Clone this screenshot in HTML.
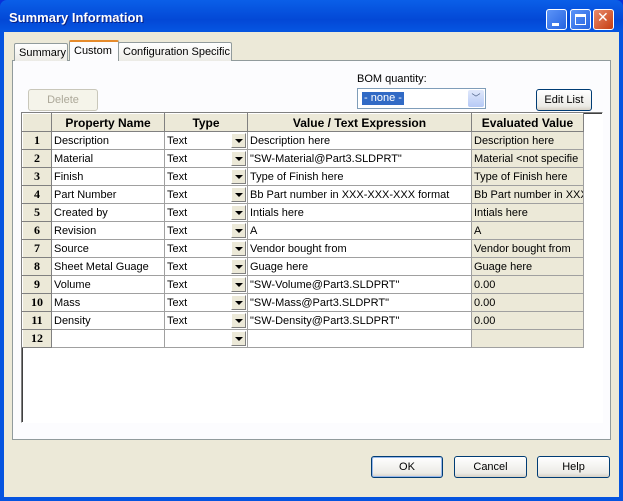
<!DOCTYPE html>
<html><head><style>
*{box-sizing:border-box;margin:0;padding:0}
body{width:623px;height:501px;overflow:hidden;font-family:"Liberation Sans",sans-serif;font-size:11px;background:#0831d9;position:relative}
.a{position:absolute;white-space:nowrap}
.win{left:0;top:0;width:623px;height:501px;background:linear-gradient(#0a5fe8,#0348d6 20px,#0554e0 30px);border-radius:7px 7px 0 0}
.body{left:4px;top:32px;width:615px;height:465px;background:#ECE9D8}
.title{left:9px;top:10px;color:#fff;font-weight:bold;font-size:13px;text-shadow:1px 1px #0a1f80}
.tb{top:9px;width:21px;height:21px;border:1px solid #fff;border-radius:3px;background:linear-gradient(135deg,#5c94f8,#2663e0)}
.panel{left:12px;top:60px;width:599px;height:380px;background:#FCFCFE;border:1px solid #919B9C}
.tab{top:42px;height:19px;border:1px solid #919B9C;border-bottom:none;background:linear-gradient(#fff,#ECEBE6);padding:3px 4px 0;border-radius:2px 2px 0 0;overflow:hidden}
.btn{height:22px;border:1px solid #003C74;border-radius:3px;background:linear-gradient(#fff,#ECEBE6 80%,#d6d0c5);text-align:center;line-height:20px}
.grid{left:21px;top:112px;width:582px;height:311px;background:#fff;border:1px solid;border-color:#808080 #fff #fff #808080;box-shadow:inset 1px 1px #404040}
table{position:absolute;left:22px;top:113px;width:561px;border-collapse:collapse;table-layout:fixed}
td{height:18px;border:1px solid #a0a0a0;padding:0 2px;white-space:nowrap;overflow:hidden;font-size:11px}
th{height:18px;background:#ECE9D8;border:1px solid #808080;border-top-color:#fff;border-left-color:#fff;font-weight:bold;font-size:12px;overflow:hidden;white-space:nowrap}
td.n{background:#ECE9D8;text-align:center;font-weight:bold;font-family:"Liberation Serif",serif;font-size:12px;border:1px solid #808080;border-top-color:#fff;border-left-color:#fff}
td.e{background:#ECE9D8}
td.t{position:relative}
td.t i{position:absolute;right:1px;top:1px;width:15px;height:15px;background:#ECE9D8;border:1px solid;border-color:#fff #808080 #808080 #fff}
td.t i:after{content:"";position:absolute;left:3px;top:5px;border:4px solid transparent;border-top:4px solid #000;border-bottom:0}
</style></head><body>
<div class="a win"></div>
<div class="a title">Summary Information</div>
<div class="a tb" style="left:546px"><div style="position:absolute;left:5px;top:13px;width:7px;height:3px;background:#fff"></div></div>
<div class="a tb" style="left:570px"><div style="position:absolute;left:4px;top:4px;width:11px;height:11px;border:1px solid #fff;border-top-width:3px"></div></div>
<div class="a tb" style="left:593px;background:linear-gradient(135deg,#e88a6c,#c63d10)"><div style="position:absolute;left:3px;top:0px;color:#fff;font-size:14px;font-weight:bold;font-family:'DejaVu Sans'">✕</div></div>
<div class="a body"></div>
<div class="a panel"></div>
<div class="a tab" style="left:14px;top:43px;height:18px;width:54px">Summary</div>
<div class="a tab" style="left:118px;width:114px">Configuration Specific</div>
<div class="a tab" style="left:69px;top:40px;height:21px;width:50px;background:#FCFCFE;border-top:2px solid #E68B2C">Custom</div>
<div class="a" style="left:357px;top:73px">BOM quantity:</div>
<div class="a" style="left:357px;top:88px;width:129px;height:21px;background:#fff;border:1px solid #7F9DB9"><span style="position:absolute;left:4px;top:3px;background:#316AC5;color:#fff;padding:0 2px;line-height:13px">- none -</span><span style="position:absolute;right:1px;top:1px;width:16px;height:17px;background:linear-gradient(#e0e8fb,#b6caf6);border-radius:2px;color:#4d6185;text-align:center;font-size:9px;line-height:17px">﹀</span></div>
<div class="a btn" style="left:28px;top:89px;width:70px;border-color:#c9c7ba;color:#aca899;background:#F5F4EA">Delete</div>
<div class="a btn" style="left:536px;top:89px;width:56px">Edit List</div>
<div class="a grid"></div>
<table>
<colgroup><col style="width:29px"><col style="width:113px"><col style="width:83px"><col style="width:224px"><col style="width:112px"></colgroup>
<tr><th></th><th>Property Name</th><th>Type</th><th>Value / Text Expression</th><th>Evaluated Value</th></tr>
<tr><td class="n">1</td><td>Description</td><td class="t">Text<i></i></td><td>Description here</td><td class="e">Description here</td></tr>
<tr><td class="n">2</td><td>Material</td><td class="t">Text<i></i></td><td>"SW-Material@Part3.SLDPRT"</td><td class="e">Material &lt;not specifie</td></tr>
<tr><td class="n">3</td><td>Finish</td><td class="t">Text<i></i></td><td>Type of Finish here</td><td class="e">Type of Finish here</td></tr>
<tr><td class="n">4</td><td>Part Number</td><td class="t">Text<i></i></td><td>Bb Part number in XXX-XXX-XXX format</td><td class="e">Bb Part number in XXX</td></tr>
<tr><td class="n">5</td><td>Created by</td><td class="t">Text<i></i></td><td>Intials here</td><td class="e">Intials here</td></tr>
<tr><td class="n">6</td><td>Revision</td><td class="t">Text<i></i></td><td>A</td><td class="e">A</td></tr>
<tr><td class="n">7</td><td>Source</td><td class="t">Text<i></i></td><td>Vendor bought from</td><td class="e">Vendor bought from</td></tr>
<tr><td class="n">8</td><td>Sheet Metal Guage</td><td class="t">Text<i></i></td><td>Guage here</td><td class="e">Guage here</td></tr>
<tr><td class="n">9</td><td>Volume</td><td class="t">Text<i></i></td><td>"SW-Volume@Part3.SLDPRT"</td><td class="e">0.00</td></tr>
<tr><td class="n">10</td><td>Mass</td><td class="t">Text<i></i></td><td>"SW-Mass@Part3.SLDPRT"</td><td class="e">0.00</td></tr>
<tr><td class="n">11</td><td>Density</td><td class="t">Text<i></i></td><td>"SW-Density@Part3.SLDPRT"</td><td class="e">0.00</td></tr>
<tr><td class="n">12</td><td></td><td class="t"><i></i></td><td></td><td class="e"></td></tr>
</table>
<div class="a btn" style="left:371px;top:456px;width:72px;box-shadow:inset 0 0 0 1px #98b8ea">OK</div>
<div class="a btn" style="left:454px;top:456px;width:73px">Cancel</div>
<div class="a btn" style="left:537px;top:456px;width:73px">Help</div>
</body></html>
